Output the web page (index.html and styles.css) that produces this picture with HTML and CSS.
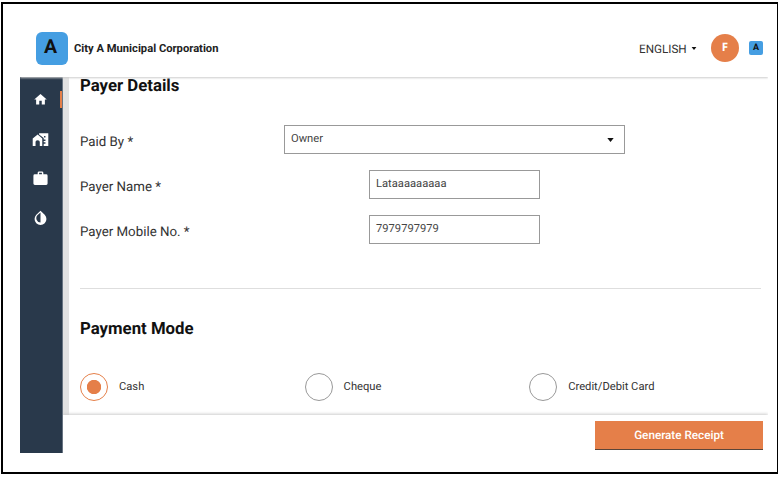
FILE: index.html
```html
<!DOCTYPE html>
<html lang="en">
<head>
<meta charset="utf-8">
<title>City A Municipal Corporation</title>
<link rel="stylesheet" href="styles.css">
</head>
<body>
<div class="frame">
  <header class="header">
    <div class="logo">A</div>
    <div class="brand">City A Municipal Corporation</div>
    <div class="language">ENGLISH</div>
    <svg class="caret" viewBox="0 0 8 5"><path d="M0 0h8L4 5z"/></svg>
    <div class="avatar">F</div>
    <div class="mini-logo">A</div>
  </header>
  <div class="body">
    <nav class="sidebar">
      <div class="nav-item active"><svg viewBox="0 0 24 24"><path d="M10 20v-6h4v6h5v-8h3L12 3 2 12h3v8z"/></svg></div>
      <div class="nav-item"><svg class="wide" viewBox="0 0 24 24"><path d="M1 10.500V21h4v-5c0-2 1-3 3-3s3 1 3 3v5h3.500V10.500L8 5z"/><path d="M10 3v2l6.500 5v2H19v2h-2.500v2H19v2h-2.500v3H23V3zm9 6h-2V7h2z"/></svg></div>
      <div class="nav-item"><svg class="wide" viewBox="0 0 24 24"><path d="M20 6h-4V4a2 2 0 0 0-2-2h-4a2 2 0 0 0-2 2v2H4a2 2 0 0 0-2 2v11a2 2 0 0 0 2 2h16a2 2 0 0 0 2-2V8a2 2 0 0 0-2-2zm-6 0h-4V4h4z"/></svg></div>
      <div class="nav-item drop"><svg viewBox="0 0 24 24"><path fill-rule="evenodd" d="M12 1 5.300 7.700a9.500 9.500 0 1 0 13.400 0zM12 20a7 7 0 0 1-5-11.500L12 4z"/></svg></div>
    </nav>
    <div class="track"></div>
    <div class="page">
      <main class="content">
        <h2 class="title payer">Payer Details</h2>
        <div class="row"><span class="label">Paid By *</span><div class="field select"><span class="value">Owner</span><svg class="caret" viewBox="0 0 8 5"><path d="M0 0h8L4 5z"/></svg></div></div>
        <div class="row"><span class="label">Payer Name *</span><div class="field input"><span class="value">Lataaaaaaaaa</span></div></div>
        <div class="row"><span class="label">Payer Mobile No. *</span><div class="field input"><span class="value">7979797979</span></div></div>
        <hr class="rule">
        <h2 class="title payment">Payment Mode</h2>
        <div class="options">
          <div class="option"><span class="radio checked"></span><span class="option-text">Cash</span></div>
          <div class="option"><span class="radio"></span><span class="option-text">Cheque</span></div>
          <div class="option"><span class="radio"></span><span class="option-text">Credit/Debit Card</span></div>
        </div>
      </main>
      <footer class="footer"><div class="button">Generate Receipt</div></footer>
    </div>
  </div>
</div>
</body>
</html>
```

FILE: styles.css
```css
* { box-sizing: border-box; }
body { margin: 0; background: #fff; font-family: Roboto, "Liberation Sans", sans-serif; color: #111; overflow: hidden; text-rendering: geometricPrecision; }
.frame { width: 777px; height: 472px; margin: 2px 0 0 1px; border: 2px solid #000; border-right-width: 1px; padding-left: 17px; }
.header { height: 73px; width: 748px; padding: 15px 5px 0 16px; display: flex; align-items: center; position: relative; z-index: 2; background: #fff; box-shadow: 0 1px 2px #ccc; clip-path: inset(0 0 -3px 0); }
.logo { width: 32px; height: 33px; border-radius: 6px; background: #459ee2; font-weight: 700; font-size: 19.500px; line-height: 30px; text-align: center; padding-right: 3px; flex: none; }
.brand { margin-left: 6px; font-size: 11.200px; font-weight: 700; white-space: nowrap; flex: 1; color: #222; }
.language { font-size: 11.700px; color: #333; width: 47px; margin-top: 1px; }
.caret { width: 6px; height: 3px; margin-left: 5px; fill: #111; }
.avatar { width: 28px; height: 28px; margin-left: 14px; border-radius: 50%; background: #e57f49; color: #fff; font: 700 11.500px/27px "Open Sans", sans-serif; text-align: center; }
.mini-logo { width: 14px; height: 14px; margin-left: 10px; border-radius: 2px; background: #459ee2; font-weight: 700; font-size: 9px; line-height: 14px; text-align: center; }
.body { width: 748px; height: 376px; display: flex; }
.sidebar { width: 43px; flex: none; background: #29394b; padding-top: 3px; border-right: 1px solid #687482; }
.nav-item { height: 39.500px; display: flex; align-items: center; justify-content: center; padding-right: 1px; }
.nav-item svg { width: 15px; height: 15px; fill: #fff; }
.nav-item svg.wide { width: 17px; height: 17px; }
.drop { padding-bottom: 2px; }
.active { background: linear-gradient(#e57f49, #e57f49) right center / 2px 17px no-repeat; }
.track { width: 6px; flex: none; height: 338px; background: #e2e2e2; }
.page { flex: 1; min-width: 0; }
.content { height: 338px; padding: 0 7px 0 11px; overflow: hidden; }
.title { margin: 0; font-size: 16.800px; line-height: 18px; font-weight: 700; white-space: nowrap; }
.row { height: 29px; margin-bottom: 16px; display: flex; align-items: center; }
.payer + .row { margin-top: 30px; }
.label { width: 204px; flex: none; padding-top: 5px; font-size: 13.300px; color: #333; white-space: nowrap; }
.field { height: 29px; border: 1px solid #999; display: flex; align-items: center; padding: 0 10px 2px 6px; justify-content: space-between; }
.select { width: 341px; }
.select .caret { width: 7px; height: 4px; margin-top: 3px; }
.input { width: 171px; margin-left: 85px; }
.value { font-size: 11.200px; color: #444; }
.rule { border: 0; height: 1px; background: #dedede; margin: 44px 0 0; width: 681px; }
.payment { margin-top: 31px; }
.options { display: flex; margin-top: 35px; }
.option { width: 224.600px; flex: none; display: flex; align-items: center; }
.radio { width: 28px; height: 28px; border: 1px solid #999; border-radius: 50%; }
.checked { border-color: #e57f49; background: radial-gradient(circle, #e57f49 6.800px, transparent 7.500px); }
.option-text { margin-left: 11px; padding-bottom: 1px; font-size: 11.200px; color: #333; white-space: nowrap; }
.footer { height: 38px; margin-left: -6px; background: #fff; box-shadow: 0 -1px 3px #ccc; clip-path: inset(-4px 0 0 0); padding: 6px 5px 0; display: flex; justify-content: flex-end; }
.button { width: 168px; height: 29px; border-bottom: 1px solid #5b4539; background: #e57f49; color: #fff; font-size: 11.700px; font-weight: 500; line-height: 28px; text-align: center; }
```
